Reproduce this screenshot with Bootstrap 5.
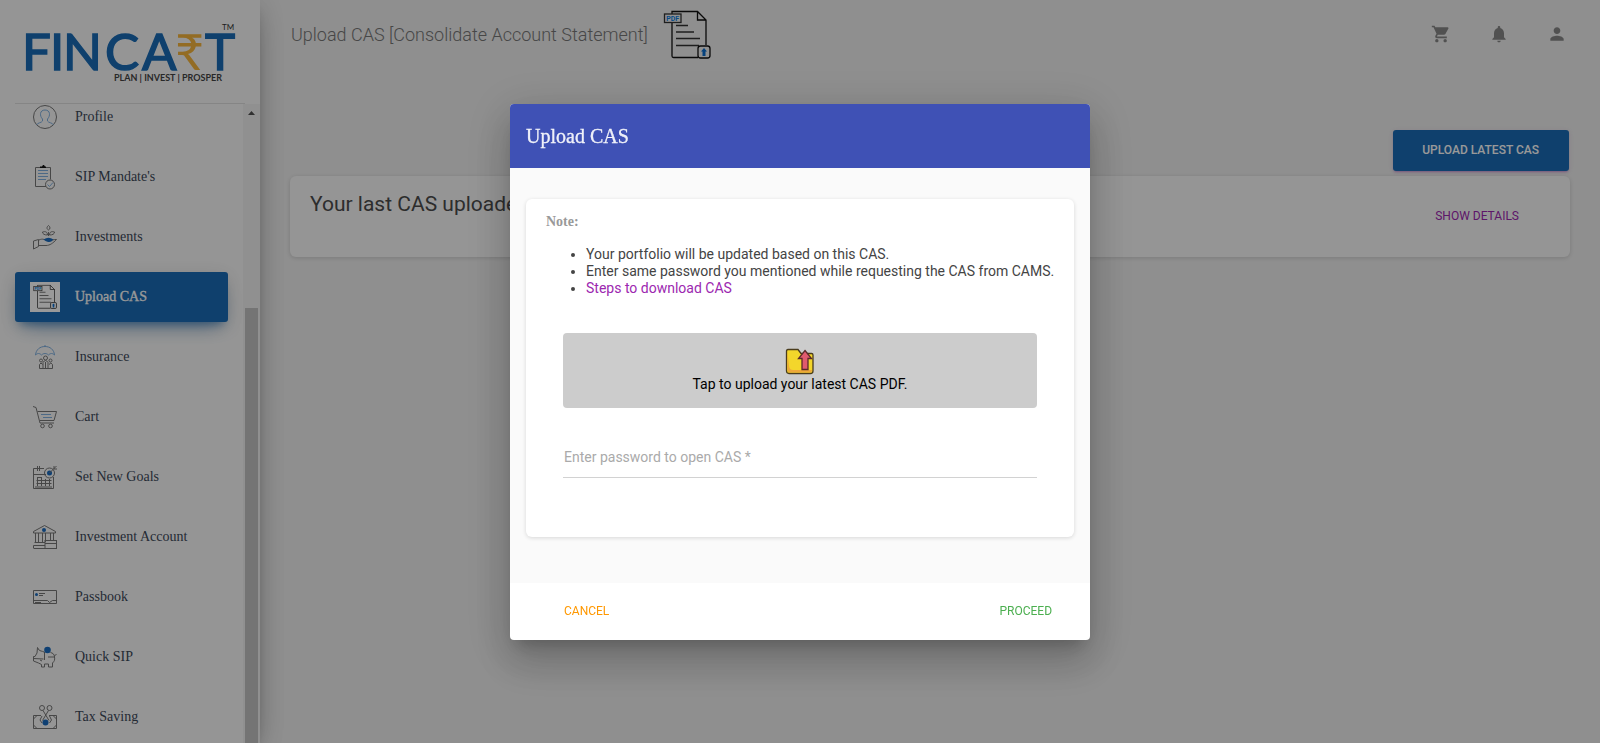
<!DOCTYPE html>
<html lang="en">
<head>
<meta charset="utf-8">
<meta name="viewport" content="width=device-width, initial-scale=1">
<title>Fincart - Upload CAS</title>
<link href="https://cdn.jsdelivr.net/npm/bootstrap@5.3.0/dist/css/bootstrap.min.css" rel="stylesheet">
<style>
  body { font-family: Roboto, "Liberation Sans", sans-serif; font-size: 14px; font-weight: 400; line-height: 20px; color: #3c4858; background: #eee; }
  .serif { font-family: "Liberation Serif", "Times New Roman", serif; }

  /* Sidebar */
  .side { width: 260px; background: #f9f9f9; box-shadow: 0 10px 30px -12px rgba(0,0,0,.42), 0 4px 25px 0 rgba(0,0,0,.12), 0 8px 10px -5px rgba(0,0,0,.2); z-index: 2; }
  .brand { height: 104px; padding: 0 15px; }
  .brand a { height: 104px; border-bottom: 1px solid #dedede; }
  .side-scroll { min-height: 0; }
  .side-list { margin-top: -12px; padding: 0 15px; }
  .side-list li { margin-bottom: 10px; }
  .side-list a { height: 50px; padding: 0 15px; gap: 15px; color: #3c4858; border-radius: 3px; font-size: 14px; font-weight: 400; }
  .side-list svg { width: 30px; height: 30px; flex: none; }
  .side-list a.active { color: #fff; background: #1a6cb6; box-shadow: 0 12px 20px -10px rgba(26,108,182,.6), 0 4px 20px 0 rgba(0,0,0,.12), 0 7px 8px -5px rgba(26,108,182,.5); -webkit-text-stroke: 0.3px #fff; }
  .side-list a.active svg { background: #fff; -webkit-text-stroke: 0; }
  .track { width: 17px; background: #f1f1f1; }
  .track-arrow { width: 17px; height: 17px; }
  .thumb { background: #c1c1c1; margin: 187px 2px 0; }
  .ln { fill: none; stroke: #777; stroke-width: 1; }
  .lb { fill: none; stroke: #7fb0e0; stroke-width: 1; }
  .dot { fill: #1a6cc0; }

  /* Page */
  .page { padding: 0 30px; }
  .topbar { height: 70px; }
  .topbar h1 { font-size: 18px; font-weight: 300; line-height: 30px; color: #777; padding-left: 1px; gap: 15px; }
  .topbar h1 svg { width: 50px; height: 50px; }
  .tool { width: 40px; height: 40px; color: #888; border: 0; background: none; }
  .tool svg { display: block; margin: 9px auto 11px; }
  .tools { gap: 18px; margin-right: -7px; }
  .upload-row { padding: 52px 1px 0 0; }
  .btn-cas { font-size: 12px; font-weight: 500; line-height: 17px; padding: 12px 30px 12px 29px; border: 0; border-radius: 3px; color: #fff; background: #1a6cb6; box-shadow: 0 2px 2px 0 rgba(156,39,176,.14), 0 3px 1px -2px rgba(156,39,176,.2), 0 1px 5px 0 rgba(156,39,176,.12); }
  .panel { background: #f9f9f9; border-radius: 6px; box-shadow: 0 1px 4px 0 rgba(0,0,0,.14); }
  .last-cas { margin-top: 5px; padding: 12px 21px 12px 20px; min-height: 81px; }
  .last-cas h2 { font-size: 21px; font-weight: 400; line-height: 32px; color: #4c4c4c; }
  .link-btn { font-size: 12px; font-weight: 400; line-height: 17px; padding: 12px 30px; border: 0; color: #9c27b0; background: none; }
  .link-cancel { color: #ff9800; }
  .link-proceed { color: #4caf50; }

  /* Dialog */
  .modal-backdrop { --bs-backdrop-opacity: .4; }
  .modal-dialog { --bs-modal-width: 580px; }
  .modal-content { border: 0; border-radius: 4px; overflow: hidden; box-shadow: 0 11px 15px -7px rgba(0,0,0,.2), 0 24px 38px 3px rgba(0,0,0,.14), 0 9px 46px 8px rgba(0,0,0,.12); }
  .modal-header { height: 64px; padding: 0 16px; border: 0; border-radius: 0; background: #3f51b5; }
  .modal-title { font-size: 20px; font-weight: 400; line-height: 24px; color: rgba(255,255,255,.9); -webkit-text-stroke: 0.3px rgba(255,255,255,.9); }
  .modal-body { padding: 31px 16px 46px; background: #fafafa; }
  .note { background: #fff; padding: 14px 20px 59px; color: #444; }
  .note h3 { font-size: 14px; font-weight: 700; line-height: 18px; color: #999; margin-bottom: 15px; }
  .note ul { padding-left: 40px; margin-bottom: 36px; margin-right: -10px; line-height: 17px; }
  .note li a { color: #9c27b0; }
  .fields { padding: 0 17px; }
  .drop { height: 75px; border: 0; border-radius: 4px; background: #ccc; color: #000; line-height: 18px; }
  .pass-row { margin-top: 27px; }
  .pass-row label { top: 12px; left: 1px; color: #aaa; pointer-events: none; }
  .pass { height: 43px; padding: 0 1px; font-size: 14px; border: 0; border-bottom: 1px solid #d2d2d2; border-radius: 0; background: none; }
  .modal-footer { height: 57px; padding: 0 8px 0 24px; border: 0; background: #fff; }
  .modal-footer > * { margin: 0; }
</style>
</head>
<body>
<svg class="d-none" aria-hidden="true">
  <symbol id="pdf" viewBox="0 0 50 50">
    <path d="M9 13V46a1.500 1.500 0 0 0 1.500 1.500H35M9 4V1.500H34.500L43 10V35M34.500 1.500V10H43" fill="none" stroke="#111" stroke-width="1.300"/>
    <path d="M13 15.500H25M13 22H31M13 28.500H37M13 35.500H36" fill="none" stroke="#333" stroke-width="1.300"/>
    <rect x="1.500" y="4" width="16.500" height="8.500" fill="#f0f0f0" stroke="#333" stroke-width="1.300"/>
    <text x="9.700" y="10.800" text-anchor="middle" font-family="Roboto, sans-serif" font-size="7" font-weight="700" fill="#0a7ee1">PDF</text>
    <rect x="35" y="36" width="12" height="12" rx="2.500" fill="#f0f0f0" stroke="#111" stroke-width="1.300"/>
    <path d="M41 38l3 3.500h-1.500V46h-3v-4.500h-1.500z" fill="#0a6ed1"/>
  </symbol>
</svg>

<div class="d-flex vh-100 overflow-hidden">
  <aside class="side d-flex flex-column flex-shrink-0">
    <div class="brand">
      <a href="#" class="d-block text-decoration-none" aria-label="Fincart">
        <svg width="230" height="90" viewBox="15 0 230 90">
          <g font-family="Lato, sans-serif" font-size="51" fill="#1a6cb6" stroke="#1a6cb6" stroke-width="1.500">
            <text x="22 50 63 105 142 205" y="70">FINCAT</text>
          </g>
          <text x="175" y="70" font-family="Lato, Roboto, sans-serif" font-size="50" fill="#f5b53d">₹</text>
          <text x="222" y="30" font-family="Lato, sans-serif" font-size="8" font-weight="400" fill="#333">TM</text>
          <text x="114" y="81" font-family="Lato, sans-serif" font-size="9" font-weight="700" fill="#444">PLAN | INVEST | PROSPER</text>
        </svg>
      </a>
    </div>
    <div class="side-scroll d-flex flex-grow-1">
      <nav class="flex-grow-1 overflow-hidden">
        <ul class="side-list list-unstyled serif mb-0">
          <li><a href="#" class="d-flex align-items-center text-decoration-none">
            <svg viewBox="0 0 30 30"><circle class="ln" cx="15" cy="15" r="11.500"/><path class="lb" d="M6.500 23c1-2.500 5-2 6-4v-2c-3-3-3-9 2.500-9s5.500 6 2.500 9v2c1 2 5 1.500 6 4"/></svg>Profile</a></li>
          <li><a href="#" class="d-flex align-items-center text-decoration-none">
            <svg viewBox="0 0 30 30"><path class="ln" d="M16 24.500H5.500v-19h15v12"/><path d="M10 6V4.500h2L13 3h1l1 1.500h1V6z" fill="#111"/><path class="lb" d="M8 8.500h10M8 11.500h10M8 14.500h10M8 17.500h8"/><circle class="ln" cx="20" cy="22.500" r="4.500"/><path class="lb" d="M17.500 22.500l2 2 3.500-4"/></svg>SIP Mandate's</a></li>
          <li><a href="#" class="d-flex align-items-center text-decoration-none">
            <svg viewBox="0 0 30 30"><path class="ln" d="M3.500 19l5-1.500v7l-5 2.500zM9 18c4-2 6 0 9 1 3 0 6-2 8.500-1.500C23 21 20 23.500 16 23.500H9"/><path class="ln" d="M18.500 14V10M18.500 8c-2-1-2-3 0-4.500 2 1.500 2 3.500 0 4.500zM17.500 13c-3 0-5-1-5-3 3-1 5 0 5 3zM19.500 13c3 0 5-1 5-3-3-1-5 0-5 3z"/><path class="dot" d="M13.500 17.500q5-3.500 10 0-2.500 3-5 2.500t-5-2.500z"/></svg>Investments</a></li>
          <li><a href="#" class="active d-flex align-items-center text-decoration-none" aria-current="page">
            <svg viewBox="-6 -5 60 60"><use href="#pdf" width="50" height="50"/></svg>Upload CAS</a></li>
          <li><a href="#" class="d-flex align-items-center text-decoration-none">
            <svg viewBox="0 0 30 30"><path class="lb" d="M5.500 13C6 7.500 10 4.500 15 4.500s9 3 9.500 8.500c-2-2-4-2-6 0-2-2-5-2-7 0-2-2-4-2-6 0zM15 3v2"/><g class="ln"><circle cx="15.500" cy="16" r="2"/><circle cx="11" cy="18.500" r="1.500"/><circle cx="20.500" cy="18.500" r="1.500"/><path d="M13 26.500v-6q2.500-4 5 0v6M9.500 26.500v-4q1.500-3 3 0M19 22.500q2-3 3.500 0v4h-13M15.500 20v6"/></g></svg>Insurance</a></li>
          <li><a href="#" class="d-flex align-items-center text-decoration-none">
            <svg viewBox="0 0 30 30"><path class="ln" d="M3 4.500l3 1 4 15.500h14M7.500 9.500h19L24 18.500H10"/><path class="lb" d="M11 12.500h10M13 15.500h9"/><circle class="ln" cx="12.500" cy="24" r="1.800"/><circle class="ln" cx="20.500" cy="24" r="1.800"/></svg>Cart</a></li>
          <li><a href="#" class="d-flex align-items-center text-decoration-none">
            <svg viewBox="0 0 30 30"><path class="ln" d="M14 6.500H3.500v20h20V15M3.500 12.500H16M7.500 4v5M9.500 4v5M5 25h17"/><path class="ln" d="M7 15.500h5M6.500 18.500h15M6.500 21.500h15M7.500 15v9M11.500 15v9M15.500 17v7M19.500 17v7"/><circle class="ln" cx="19.500" cy="11" r="5"/><circle class="dot" cx="19.500" cy="11" r="2.500"/><path class="ln" d="M19.500 11l7-7M24 4v3h3"/></svg>Set New Goals</a></li>
          <li><a href="#" class="d-flex align-items-center text-decoration-none">
            <svg viewBox="0 0 30 30"><path class="ln" d="M3.500 11V9.500L14.500 3.500l11 6V11zM5.500 11v9M8.500 11v9M12.500 11v9M15.500 11v9M20.500 11v7M23.500 11v7M4.500 20.500H15M3.500 23.500H15M3.500 26.500v-3M4 26.500h11"/><circle class="dot" cx="14" cy="8" r="2"/><rect class="ln" x="15" y="18.500" width="11.500" height="8"/><path class="ln" d="M15 21.500h11.500"/></svg>Investment Account</a></li>
          <li><a href="#" class="d-flex align-items-center text-decoration-none">
            <svg viewBox="0 0 30 30"><path class="ln" d="M3.500 8.500h23v13h-23zM3.500 18.500h14l2 2 3-2h4"/><circle class="dot" cx="6.500" cy="12.500" r="1.500"/><path class="ln" d="M9 11.500h6M9 13.500h4M5 20.500h6"/></svg>Passbook</a></li>
          <li><a href="#" class="d-flex align-items-center text-decoration-none">
            <svg viewBox="0 0 30 30"><path class="ln" d="M14 10c-2-1-4-1-5-2L7.500 5.500 7 11l-2 3.500H3.500v4.500l5 2 3 1.500v2.500h3V22h4v3h4v-4c2-2 2.500-3 2-6 0-3-2-4-4-4.500M26.500 12.500l-2 1M3.500 16.500l10 .5M14.500 10v8M18 15h7M10 18l2 1"/><circle class="dot" cx="17.500" cy="8" r="3.300"/></svg>Quick SIP</a></li>
          <li><a href="#" class="d-flex align-items-center text-decoration-none">
            <svg viewBox="0 0 30 30"><path class="ln" d="M11 13.500H3.500v13h23v-13H19M3.500 17l3-3M23.500 14l3 3M3.500 23l3 3M23.500 26l3-3"/><circle class="ln" cx="12" cy="6" r="2.500"/><circle class="ln" cx="19.500" cy="6" r="2.500"/><path class="ln" d="M13 8.500l6 10M18.500 8.500l-6 10M12 14l-2 4 2 3M19.500 14l2 4-2 3"/><circle class="dot" cx="15.500" cy="20.500" r="3"/></svg>Tax Saving</a></li>
        </ul>
      </nav>
      <div class="track d-flex flex-column" aria-hidden="true">
        <svg class="track-arrow flex-shrink-0" viewBox="0 0 17 17"><path d="M5 11h7L8.500 7z" fill="#505050"/></svg>
        <div class="thumb flex-grow-1"></div>
      </div>
    </div>
  </aside>

  <main class="page flex-grow-1">
    <header class="topbar d-flex align-items-center justify-content-between mb-2">
      <h1 class="d-flex align-items-center mb-0">Upload CAS [Consolidate Account Statement] <svg><use href="#pdf"/></svg></h1>
      <div class="tools d-flex">
        <button type="button" class="tool p-0" aria-label="Cart"><svg width="20" height="20" viewBox="0 0 24 24" fill="currentColor"><path d="M7 18c-1.100 0-1.990.9-1.990 2S5.900 22 7 22s2-.9 2-2-.9-2-2-2zM1 2v2h2l3.600 7.590-1.350 2.450c-.16.280-.25.610-.25.960 0 1.100.9 2 2 2h12v-2H7.420c-.14 0-.25-.11-.25-.25l.03-.12.900-1.630h7.450c.75 0 1.410-.41 1.750-1.030l3.580-6.490c.08-.14.120-.31.120-.48 0-.55-.45-1-1-1H5.210l-.94-2H1zm16 16c-1.100 0-1.990.9-1.990 2s.89 2 1.990 2 2-.9 2-2-.9-2-2-2z"/></svg></button>
        <button type="button" class="tool p-0" aria-label="Notifications"><svg width="20" height="20" viewBox="0 0 24 24" fill="currentColor"><path d="M12 22c1.100 0 2-.9 2-2h-4c0 1.100.89 2 2 2zm6-6v-5c0-3.070-1.640-5.640-4.500-6.320V4c0-.83-.67-1.500-1.500-1.500s-1.500.67-1.500 1.500v.68C7.630 5.360 6 7.920 6 11v5l-2 2v1h16v-1l-2-2z"/></svg></button>
        <button type="button" class="tool p-0" aria-label="Account"><svg width="20" height="20" viewBox="0 0 24 24" fill="currentColor"><path d="M12 12c2.210 0 4-1.790 4-4s-1.790-4-4-4-4 1.790-4 4 1.790 4 4 4zm0 2c-2.670 0-8 1.340-8 4v2h16v-2c0-2.660-5.330-4-8-4z"/></svg></button>
      </div>
    </header>
    <div class="upload-row d-flex justify-content-end">
      <button type="button" class="btn-cas text-uppercase">Upload latest CAS</button>
    </div>
    <section class="panel last-cas d-flex justify-content-between">
      <h2 class="mb-0">Your last CAS uploaded on</h2>
      <button type="button" class="link-btn text-uppercase align-self-center">Show details</button>
    </section>
  </main>
</div>

<div class="modal-backdrop show"></div>
<div class="modal show d-block" role="dialog" aria-modal="true" aria-labelledby="casTitle">
  <div class="modal-dialog modal-dialog-centered my-0 min-vh-100">
    <form class="modal-content">
      <div class="modal-header"><h2 class="modal-title serif" id="casTitle">Upload CAS</h2></div>
      <div class="modal-body">
        <div class="panel note">
          <h3 class="serif">Note:</h3>
          <ul>
            <li>Your portfolio will be updated based on this CAS.</li>
            <li>Enter same password you mentioned while requesting the CAS from CAMS.</li>
            <li><a href="#" class="text-decoration-none">Steps to download CAS</a></li>
          </ul>
          <div class="fields">
            <button type="button" class="drop w-100 d-flex flex-column align-items-center justify-content-center">
              <svg width="30" height="28" viewBox="0 0 30 28"><path d="M3 2.500h10l3 4h10.500q1.500 0 1.500 1.500v16q0 2.500-2.500 2.500H4q-2.500 0-2.500-2.500V4.500q0-2 1.500-2z" fill="#f3d62b" stroke="#4a3c1c" stroke-width="1.300"/><path d="M2.500 5v17.500q0 3 3 3h19q2.500 0 2.500-2.500H8q-3.500 0-4-4z" fill="#eea83a"/><path d="M20 3.500l6.500 8H23v11h-6v-11h-3.500z" fill="#e05a6e" stroke="#5a2a2a" stroke-width="1.300"/></svg>
              <span>Tap to upload your latest CAS PDF.</span>
            </button>
            <div class="pass-row position-relative">
              <label for="casPass" class="position-absolute">Enter password to open CAS *</label>
              <input type="password" id="casPass" class="pass w-100 d-block" required>
            </div>
          </div>
        </div>
      </div>
      <div class="modal-footer flex-nowrap justify-content-between">
        <button type="button" class="link-btn link-cancel text-uppercase">Cancel</button>
        <button type="submit" class="link-btn link-proceed text-uppercase">Proceed</button>
      </div>
    </form>
  </div>
</div>
<script src="https://cdn.jsdelivr.net/npm/bootstrap@5.3.0/dist/js/bootstrap.bundle.min.js"></script>
</body>
</html>
